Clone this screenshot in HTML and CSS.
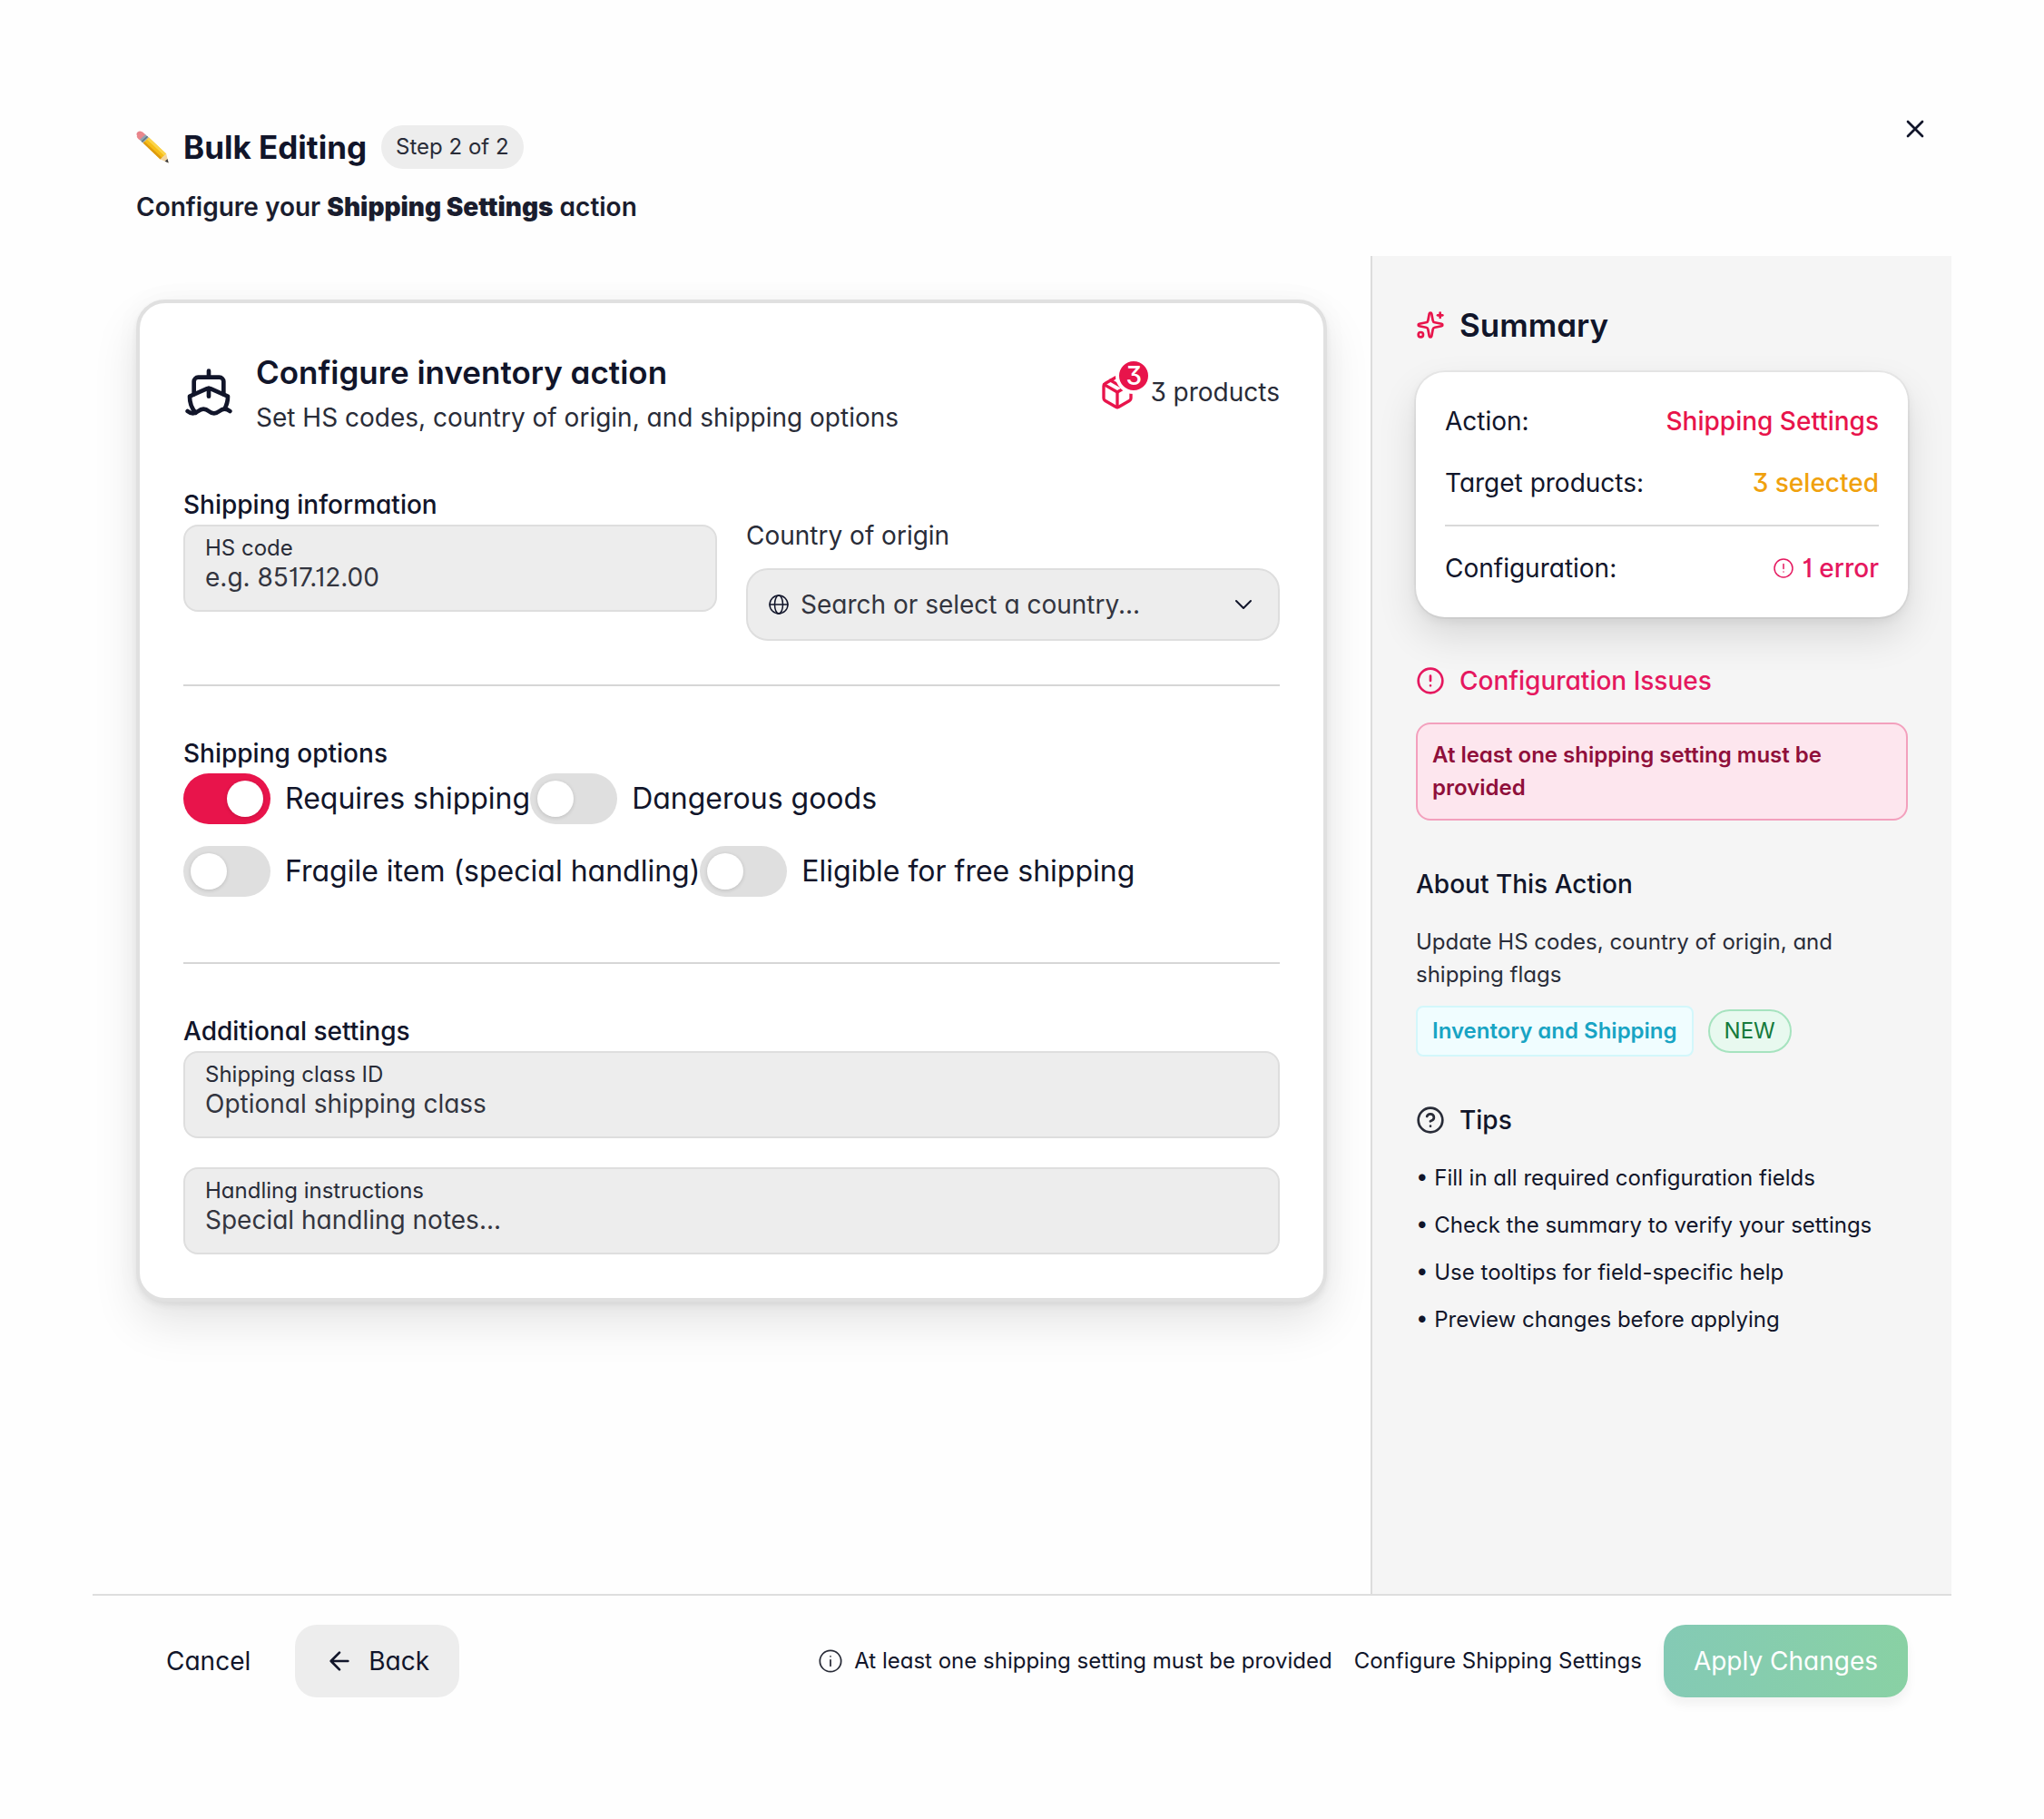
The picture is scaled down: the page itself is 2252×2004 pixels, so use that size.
FILE: index.html
```html
<!DOCTYPE html>
<html lang="en">
<head>
  <meta charset="UTF-8">
  <meta name="viewport" content="width=device-width, initial-scale=1">
  <title>Bulk Editing</title>
  <link rel="stylesheet" href="styles.css">
</head>
<body>

<div class="modal" role="dialog" aria-labelledby="modal-title">

  <header class="modal-header">
    <div>
      <div class="title-row">
        <svg class="pencil" viewBox="0 0 36 36" aria-hidden="true">
          <path d="M1.5 6.5 6.5 1.2Q3.8-.3 1.6 1.6T1.5 6.5Z" fill="#e8838a"/>
          <path d="M.8 6 6.6.9 10.6 4.6 4.2 10.4Q.5 8 .8 6Z" fill="#e9878c"/>
          <path d="M10.2 4.2 14 7.6 7.6 13.6 3.9 10.1Z" fill="#8fa3b0"/>
          <path d="M12 5.8 13 6.7 6.6 12.7 5.7 11.8Z" fill="#5f7482"/>
          <path d="M14 7.6 33.2 25.4 26.6 31.4 7.6 13.6Z" fill="#f6bd16"/>
          <path d="M14 7.6 33.2 25.4 31 27.4 11.8 9.6Z" fill="#fbd44b"/>
          <path d="M9.4 12 28.5 29.7 26.6 31.4 7.6 13.6Z" fill="#dd9a10"/>
          <path d="M33.2 25.4 35.7 35.4 26.6 31.4Z" fill="#f2d5a0"/>
          <path d="M34.6 31 35.7 35.4 31.7 33.7Z" fill="#3b3b3f"/>
        </svg>
        <h1 id="modal-title">Bulk Editing</h1>
        <span class="step-chip">Step 2 of 2</span>
      </div>
      <p class="subtitle">Configure your <strong>Shipping Settings</strong> action</p>
    </div>
    <button type="button" class="close-btn" aria-label="Close">
      <svg class="icon" viewBox="0 0 24 24"><path d="M18 6 6 18M6 6l12 12"/></svg>
    </button>
  </header>

  <div class="modal-body">
    <main class="content">
      <form class="card" id="shipping-form">

        <div class="card-header">
          <svg class="icon ship" viewBox="0 0 24 24">
            <path d="M12 10.189V14"/>
            <path d="M12 2v3"/>
            <path d="M19 13V7a2 2 0 0 0-2-2H7a2 2 0 0 0-2 2v6"/>
            <path d="M19.38 20A11.6 11.6 0 0 0 21 14l-8.188-3.639a2 2 0 0 0-1.624 0L3 14a11.6 11.6 0 0 0 2.81 7.76"/>
            <path d="M2 21c.6.5 1.2 1 2.5 1 2.5 0 2.5-2 5-2 1.3 0 1.9.5 2.5 1s1.2 1 2.5 1c2.5 0 2.5-2 5-2 1.3 0 1.9.5 2.5 1"/>
          </svg>
          <div class="card-title">
            <h2>Configure inventory action</h2>
            <p>Set HS codes, country of origin, and shipping options</p>
          </div>
          <div class="products">
            <span class="products-icon">
              <svg class="icon box" viewBox="0 0 24 24">
                <path d="m7.5 4.27 9 5.15"/>
                <path d="M21 8a2 2 0 0 0-1-1.73l-7-4a2 2 0 0 0-2 0l-7 4A2 2 0 0 0 3 8v8a2 2 0 0 0 1 1.73l7 4a2 2 0 0 0 2 0l7-4A2 2 0 0 0 21 16Z"/>
                <path d="m3.3 7 8.7 5 8.7-5"/>
                <path d="M12 22V12"/>
              </svg>
              <span class="badge">3</span>
            </span>
            <span>3 products</span>
          </div>
        </div>

        <section>
          <h3>Shipping information</h3>
          <div class="two-cols">
            <div class="field">
              <label for="hs-code">HS code</label>
              <input type="text" id="hs-code" placeholder="e.g. 8517.12.00">
            </div>
            <div class="country">
              <label for="country">Country of origin</label>
              <div class="select-box">
                <svg class="icon globe" viewBox="0 0 24 24">
                  <circle cx="12" cy="12" r="10"/>
                  <ellipse cx="12" cy="12" rx="4.5" ry="10"/>
                  <path d="M2 12h20"/>
                </svg>
                <select id="country">
                  <option>Search or select a country...</option>
                </select>
                <svg class="icon chevron" viewBox="0 0 24 24"><path d="m6 9 6 6 6-6"/></svg>
              </div>
            </div>
          </div>
        </section>

        <hr>

        <section>
          <h3>Shipping options</h3>
          <div class="switches">
            <div class="switch-row">
              <label class="switch"><input type="checkbox" checked>Requires shipping</label>
              <label class="switch"><input type="checkbox">Dangerous goods</label>
            </div>
            <div class="switch-row">
              <label class="switch"><input type="checkbox">Fragile item (special handling)</label>
              <label class="switch"><input type="checkbox">Eligible for free shipping</label>
            </div>
          </div>
        </section>

        <hr>

        <section>
          <h3>Additional settings</h3>
          <div class="stack">
            <div class="field">
              <label for="ship-class">Shipping class ID</label>
              <input type="text" id="ship-class" placeholder="Optional shipping class">
            </div>
            <div class="field">
              <label for="handling">Handling instructions</label>
              <input type="text" id="handling" placeholder="Special handling notes...">
            </div>
          </div>
        </section>
      </form>
    </main>

    <aside class="sidebar">
      <section class="side-section">
        <h2 class="side-title">
          <svg class="icon pink" viewBox="0 0 24 24">
            <path d="M11.017 2.814a1 1 0 0 1 1.966 0l1.051 5.558a2 2 0 0 0 1.594 1.594l5.558 1.051a1 1 0 0 1 0 1.966l-5.558 1.051a2 2 0 0 0-1.594 1.594l-1.051 5.558a1 1 0 0 1-1.966 0l-1.051-5.558a2 2 0 0 0-1.594-1.594l-5.558-1.051a1 1 0 0 1 0-1.966l5.558-1.051a2 2 0 0 0 1.594-1.594z"/>
            <path d="M20 2v4"/>
            <path d="M22 4h-4"/>
            <circle cx="4" cy="20" r="2"/>
          </svg>
          Summary
        </h2>
        <div class="summary">
          <div class="summary-row"><span>Action:</span><span class="value pink">Shipping Settings</span></div>
          <div class="summary-row"><span>Target products:</span><span class="value amber">3 selected</span></div>
          <div class="line"></div>
          <div class="summary-row">
            <span>Configuration:</span>
            <span class="value rose">
              <svg class="icon small" viewBox="0 0 24 24"><circle cx="12" cy="12" r="10"/><path d="M12 7.5v5M12 16h.01"/></svg>
              1 error
            </span>
          </div>
        </div>
      </section>

      <section class="side-section">
        <h3 class="side-subtitle rose">
          <svg class="icon" viewBox="0 0 24 24"><circle cx="12" cy="12" r="10"/><path d="M12 8v4M12 16h.01"/></svg>
          Configuration Issues
        </h3>
        <p class="alert">At least one shipping setting must be provided</p>
      </section>

      <section class="side-section">
        <h3 class="side-subtitle">About This Action</h3>
        <p class="about">Update HS codes, country of origin, and shipping flags</p>
        <div class="tags">
          <span class="tag-category">Inventory and Shipping</span>
          <span class="tag-new">NEW</span>
        </div>
      </section>

      <section class="side-section">
        <h3 class="side-subtitle">
          <svg class="icon muted" viewBox="0 0 24 24"><circle cx="12" cy="12" r="10"/><path d="M9.09 9a3 3 0 0 1 5.83 1c0 2-3 3-3 3M12 17h.01"/></svg>
          Tips
        </h3>
        <ul class="tips">
          <li>• Fill in all required configuration fields</li>
          <li>• Check the summary to verify your settings</li>
          <li>• Use tooltips for field-specific help</li>
          <li>• Preview changes before applying</li>
        </ul>
      </section>
    </aside>
  </div>

  <footer class="modal-footer">
    <div class="footer-left">
      <button type="button" class="btn">Cancel</button>
      <button type="button" class="btn btn-flat">
        <svg class="icon" viewBox="0 0 24 24"><path d="m12 19-7-7 7-7M19 12H5"/></svg>
        Back
      </button>
    </div>
    <div class="footer-right">
      <span class="hint">
        <svg class="icon muted" viewBox="0 0 24 24"><circle cx="12" cy="12" r="10"/><path d="M12 16.500v-5.500M12 7.500h.01"/></svg>
        At least one shipping setting must be provided
      </span>
      <span>Configure Shipping Settings</span>
      <button type="submit" form="shipping-form" class="btn btn-apply">Apply Changes</button>
    </div>
  </footer>
</div>

</body>
</html>
```
FILE: styles.css
```css
:root {
  --text: #11152a;
  --soft: #292c38;
  --pink: #e8144b;
  --rose: #e5185f;
  --amber: #f0a10e;
  --line: #dedede;
  --fill: #ededed;
}

* {
  box-sizing: border-box;
  margin: 0;
  padding: 0;
}

body {
  background-color: #fefefe;
  color: var(--text);
  font-family: Inter, "Liberation Sans", sans-serif;
  font-feature-settings: "cv11", "cv09", "cv01";
  font-size: 28px;
  line-height: 44px;
  padding: 102px;
}

button, input, select {
  font: inherit;
  font-feature-settings: inherit;
  color: inherit;
  border: none;
  background: none;
  outline: none;
}

button {
  cursor: pointer;
}

.icon {
  width: 32px;
  height: 32px;
  flex-shrink: 0;
  fill: none;
  stroke: currentColor;
  stroke-width: 2;
  stroke-linecap: round;
  stroke-linejoin: round;
}

.pink { color: var(--pink); }
.rose { color: var(--rose); }
.amber { color: var(--amber); }
.muted { color: var(--soft); }

.modal {
  display: flex;
  flex-direction: column;
  min-height: calc(100vh - 204px);
}

/* Header */
.modal-header {
  display: flex;
  justify-content: space-between;
  align-items: flex-start;
  padding: 32px 16px 32px 48px;
}

.title-row {
  display: flex;
  align-items: center;
  gap: 16px;
}

.pencil {
  width: 36px;
  height: 36px;
}

h1, h2 {
  font-size: 35px;
  line-height: 56px;
  font-weight: 600;
}

h1 {
  font-weight: 700;
}

h3 {
  font-size: 28px;
  font-weight: 500;
}

.step-chip {
  background-color: var(--fill);
  color: var(--soft);
  border-radius: 24px;
  padding: 0 16px;
  font-size: 24px;
  line-height: 48px;
}

.subtitle {
  margin-top: 16px;
  font-weight: 600;
  color: #1a1d2e;
}

.subtitle strong {
  font-weight: 900;
}

.close-btn {
  display: flex;
  padding: 8px;
  margin-top: -16px;
}

/* Body */
.modal-body {
  flex: 1;
  display: flex;
}

.content {
  flex: 1;
  padding: 48px;
}

.card {
  background-color: white;
  border: 4px solid #e0e0e0;
  border-radius: 32px;
  padding: 48px;
  box-shadow: 0 0 30px rgba(0,0,0,0.03), 0 4px 6px rgba(0,0,0,0.06), 0 24px 50px rgba(0,0,0,0.10);
}

.card-header {
  display: flex;
  align-items: center;
  gap: 24px;
  margin-bottom: 48px;
}

.ship {
  width: 56px;
  height: 56px;
}

.card-title {
  flex: 1;
}

.card-title p {
  color: var(--soft);
}

.products {
  display: flex;
  align-items: center;
  gap: 16px;
  color: var(--soft);
}

.products-icon {
  position: relative;
  display: flex;
  color: var(--pink);
}

.box {
  width: 40px;
  height: 40px;
}

.badge {
  position: absolute;
  top: -18px;
  right: -18px;
  width: 40px;
  height: 40px;
  border: 4px solid white;
  border-radius: 50%;
  background-color: var(--pink);
  color: white;
  font-size: 28px;
  font-weight: 500;
  line-height: 32px;
  text-align: center;
}

.card h3 {
  padding-top: 4px;
}

.card hr {
  border: none;
  height: 2px;
  background-color: #d6d6d6;
  margin: 48px 0;
}

.two-cols {
  display: grid;
  grid-template-columns: 1fr 1fr;
  align-items: start;
  gap: 32px;
}

.stack {
  display: grid;
  gap: 32px;
}

.field {
  background-color: var(--fill);
  border: 2px solid var(--line);
  border-radius: 16px;
  padding: 8px 22px 20px;
  line-height: 32px;
}

.field label {
  display: block;
  font-size: 24px;
  color: var(--soft);
}

.field input {
  display: block;
  width: 100%;
  height: 32px;
}

.field input::placeholder {
  color: #33353f;
  opacity: 1;
}

.country label {
  display: block;
  line-height: 24px;
  margin-bottom: 24px;
  color: var(--soft);
}

.select-box {
  display: flex;
  align-items: center;
  gap: 12px;
  height: 80px;
  padding: 0 22px;
  background-color: var(--fill);
  border: 2px solid var(--line);
  border-radius: 24px;
}

.select-box select {
  flex: 1;
  appearance: none;
  color: #33353f;
}

.globe, .small {
  width: 24px;
  height: 24px;
}

.globe, .small, .chevron, .hint .icon {
  stroke-width: 1.5;
}

.switches {
  display: grid;
  gap: 24px;
  padding-bottom: 24px;
}

.switch-row {
  display: flex;
  flex-wrap: wrap;
}

.switch {
  display: flex;
  align-items: center;
  gap: 16px;
  font-size: 32px;
  cursor: pointer;
}

.switch input {
  appearance: none;
  display: flex;
  width: 96px;
  height: 56px;
  padding: 8px;
  border-radius: 28px;
  background-color: #dfdfdf;
}

.switch input::before {
  content: "";
  width: 40px;
  height: 40px;
  border-radius: 50%;
  background-color: white;
  box-shadow: 0 1px 4px rgba(0,0,0,0.15);
}

.switch input:checked {
  justify-content: flex-end;
  background-color: var(--pink);
}

/* Sidebar */
.sidebar {
  width: 640px;
  padding: 48px;
  border-left: 2px solid #dcdcdc;
  background-color: #f5f5f5;
}

.side-section + .side-section {
  margin-top: 48px;
}

.side-title, .side-subtitle {
  display: flex;
  align-items: center;
  gap: 16px;
  margin-bottom: 24px;
}

.summary {
  display: grid;
  gap: 24px;
  padding: 32px;
  border-radius: 32px;
  background-color: white;
  box-shadow: 0 0 0 2px rgba(0,0,0,0.04), 0 4px 12px rgba(0,0,0,0.06), 0 20px 44px rgba(0,0,0,0.12);
}

.summary-row {
  display: flex;
  justify-content: space-between;
}

.value {
  display: flex;
  align-items: center;
  gap: 8px;
  font-weight: 500;
}

.line {
  height: 2px;
  background-color: #d9d9d9;
}

.alert {
  padding: 16px;
  border: 2px solid #f3a0bd;
  border-radius: 16px;
  background-color: #fde6ee;
  color: #8f0f3a;
  font-size: 24px;
  font-weight: 600;
  line-height: 36px;
}

.about {
  font-size: 24px;
  line-height: 36px;
  color: var(--soft);
}

.tags {
  display: flex;
  align-items: center;
  gap: 16px;
  margin-top: 16px;
  font-size: 24px;
}

.tag-category {
  padding: 4px 16px;
  border: 2px solid #d3f7fb;
  border-radius: 8px;
  background-color: #f0fdff;
  color: #18a4c4;
  font-weight: 600;
}

.tag-new {
  padding: 0 16px;
  border: 2px solid #a6e3bf;
  border-radius: 24px;
  background-color: #e8f9ef;
  color: #157a3c;
}

.tips {
  display: grid;
  gap: 16px;
  list-style: none;
  font-size: 24px;
  line-height: 36px;
}

/* Footer */
.modal-footer {
  display: flex;
  justify-content: space-between;
  padding: 32px 48px;
  border-top: 2px solid var(--line);
}

.footer-left, .footer-right {
  display: flex;
  align-items: center;
}

.footer-left {
  gap: 16px;
}

.footer-right {
  gap: 24px;
  font-size: 24px;
}

.hint {
  display: flex;
  align-items: center;
  gap: 12px;
}

.hint .icon {
  width: 28px;
  height: 28px;
}

.btn {
  display: flex;
  align-items: center;
  gap: 16px;
  height: 80px;
  padding: 0 33px;
  border-radius: 24px;
  font-size: 28px;
}

.btn-flat {
  background-color: var(--fill);
}

.btn-apply {
  background: linear-gradient(to right, #84cab5, #89d1a4);
  color: white;
  box-shadow: 0 8px 12px rgba(0,0,0,0.05);
}

@media (max-width: 1400px) {
  .modal-body { flex-direction: column; }
  .sidebar { width: 100%; border-left: none; }
  .modal-footer { flex-direction: column; gap: 24px; }
}
```
